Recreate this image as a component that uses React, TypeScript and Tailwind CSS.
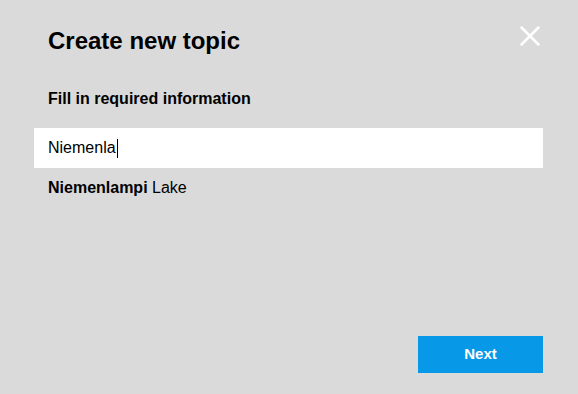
import { X } from "lucide-react";

export default function App() {
  return (
    <div className="w-[578px] h-[394px] bg-[#dadada] font-['Liberation_Sans',Arial,sans-serif] text-black flex flex-col">
      <div className="flex items-start justify-between pl-12 pr-[31px] pt-[26px]">
        <h1 className="text-[24px] font-bold leading-[30px]">Create new topic</h1>
        <X className="size-[34px] text-white -mt-[7px]" strokeWidth={1.8} />
      </div>
      <h2 className="pl-12 mt-[33px] text-[16px] font-bold leading-[20px]">Fill in required information</h2>
      <div className="ml-[34px] mr-[35px] mt-[19px] h-10 bg-white flex items-center px-[14px] text-[16px]">
        Niemenla<span className="inline-block w-px h-[19px] bg-black ml-[1px]" />
      </div>
      <div className="pl-12 mt-[10px] text-[16px] leading-[20px]">
        <span className="font-bold">Niemenlampi</span> Lake
      </div>
      <div className="flex-1" />
      <div className="flex justify-end pr-[35px] pb-[21px]">
        <button className="w-[125px] h-[37px] bg-[#0799e8] text-white text-[15px] font-bold">Next</button>
      </div>
    </div>
  );
}
